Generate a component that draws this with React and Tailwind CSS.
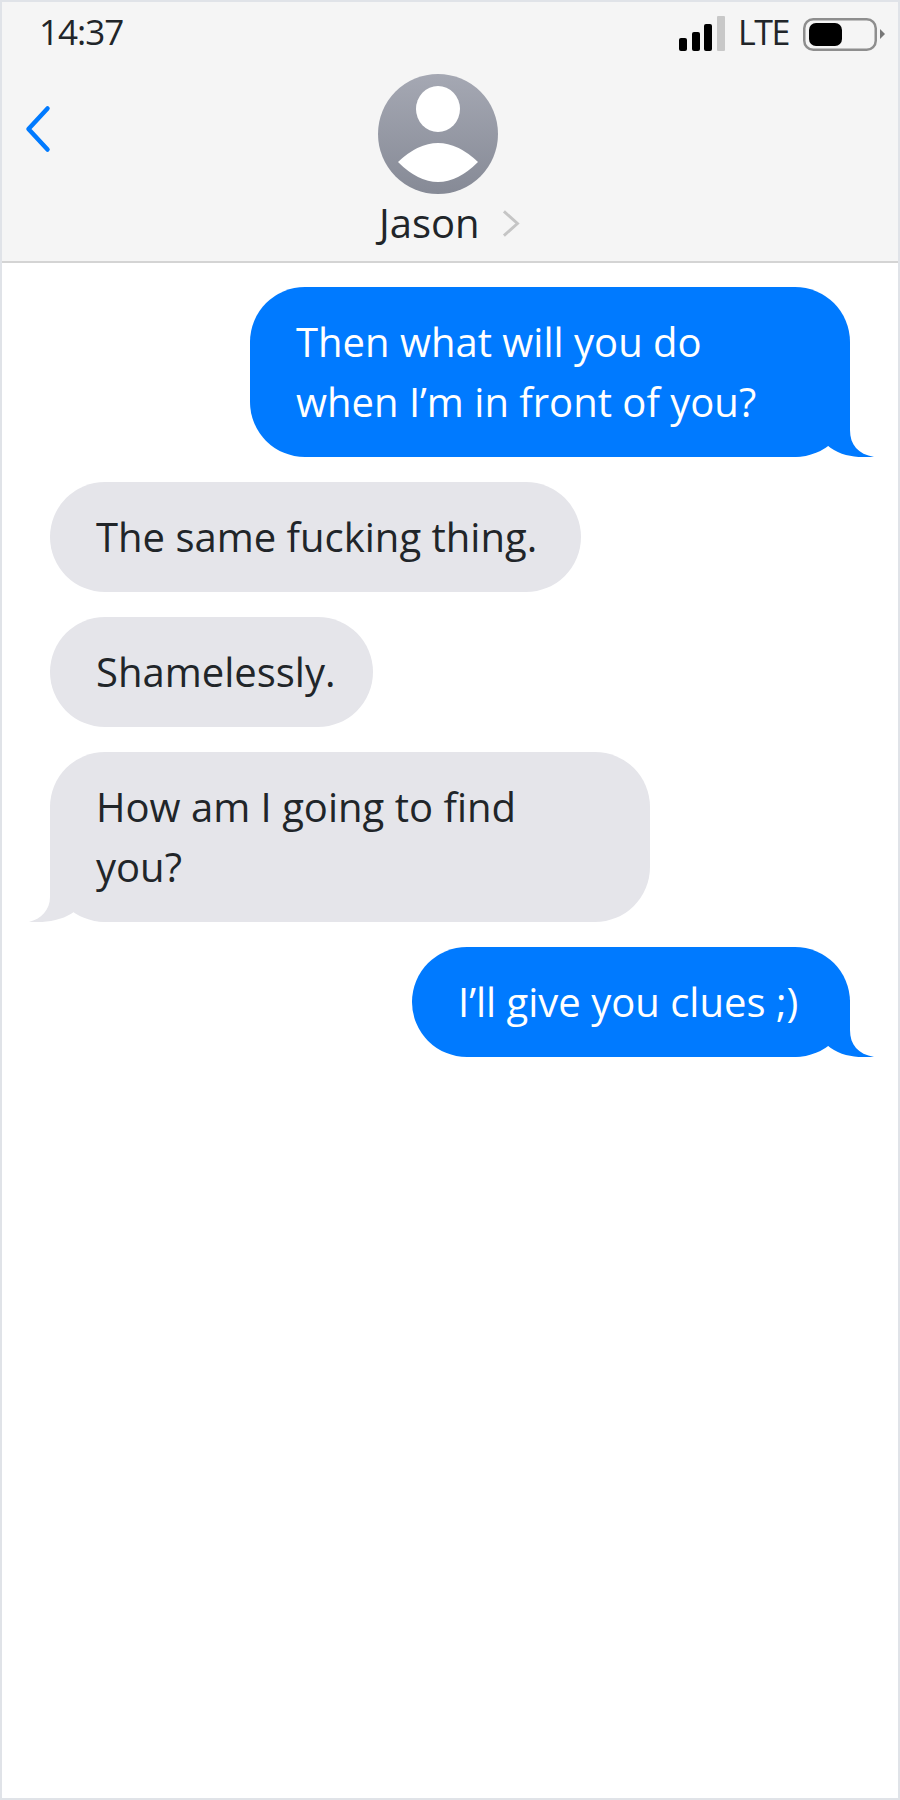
import React from "react";

const messages = [
  { id: 1, from: "me", width: "w-[600px]", lines: ["Then what will you do", "when I’m in front of you?"], tail: true },
  { id: 2, from: "them", width: "w-[531px]", lines: ["The same fucking thing."] },
  { id: 3, from: "them", width: "w-[323px]", lines: ["Shamelessly."] },
  { id: 4, from: "them", width: "w-[600px]", lines: ["How am I going to find", "you?"], tail: true },
  { id: 5, from: "me", width: "w-[438px]", lines: ["I’ll give you clues ;)"], tail: true },
];

const SentTail = () => (
  <svg className="absolute right-[-24px] bottom-0" width="84" height="57" viewBox="0 0 84 57">
    <path d="M60 0 V30 C60 45 68 54 84 57 C70 58 50 57 37 45 C30 52 15 57 0 57 V0 Z" fill="#007aff" />
  </svg>
);

const ReceivedTail = () => (
  <svg className="absolute left-[-21px] bottom-0" width="78" height="57" viewBox="0 0 78 57">
    <path d="M21 0 V32 C21 45 12 54 0 57 C14 58 34 56 46 46 C55 53 68 57 78 57 V0 Z" fill="#e5e5ea" />
  </svg>
);

const Bubble = ({ message }) => {
  const mine = message.from === "me";
  return (
    <div
      className={`relative ${message.width} rounded-[55px] px-[46px] py-[25px] text-[40px] leading-[60px] whitespace-nowrap ${
        mine ? "self-end bg-[#007aff] text-white" : "self-start bg-[#e5e5ea] text-[#212529]"
      }`}
    >
      {message.tail && (mine ? <SentTail /> : <ReceivedTail />)}
      <div className="relative">
        {message.lines.map((line) => (
          <div key={line}>{line}</div>
        ))}
      </div>
    </div>
  );
};

const StatusBar = () => (
  <div className="h-[60px] flex items-center justify-between pl-[37px] pr-[13px] text-[35px] text-[#212529] tracking-[-1px]">
    <span>14:37</span>
    <div className="flex items-center">
      <div className="flex items-end gap-[4.6px] h-[35px] mt-[2px]">
        <div className="w-2 h-[13px] rounded-[2px] bg-black" />
        <div className="w-2 h-[19px] rounded-[2px] bg-black" />
        <div className="w-2 h-[27px] rounded-[2px] bg-black" />
        <div className="w-2 h-[35px] rounded-[1px] bg-[#c8c8c8]" />
      </div>
      <span className="ml-[13px] w-[48px] text-[34px] tracking-[-1.5px]">LTE</span>
      <svg className="ml-[17px] mt-[4px]" width="82" height="33" viewBox="0 0 82 33">
        <rect x="1.25" y="1.25" width="71.5" height="30.5" rx="9" fill="none" stroke="#8e8e8e" strokeWidth="2.5" />
        <rect x="6" y="5" width="33" height="23" rx="7" fill="#000" />
        <path d="M77 11 L82 16 L77 21 Z" fill="#777" />
      </svg>
    </div>
  </div>
);

const ContactRow = () => (
  <div className="grid grid-cols-[376px_142px] pt-[12px]">
    <svg className="ml-[23px] mt-[31px]" width="26" height="48" viewBox="0 0 26 48">
      <path d="M22.5 3.5 L3.5 24 L22.5 44.5" fill="none" stroke="#007aff" strokeWidth="4.5" strokeLinecap="round" strokeLinejoin="round" />
    </svg>
    <div className="flex flex-col items-start">
      <svg width="120" height="120" viewBox="0 0 120 120">
        <defs>
          <linearGradient id="avatarFill" x1="0" y1="0" x2="0" y2="1">
            <stop offset="0" stopColor="#a5a8b3" />
            <stop offset="1" stopColor="#868a96" />
          </linearGradient>
        </defs>
        <circle cx="60" cy="60" r="60" fill="url(#avatarFill)" />
        <ellipse cx="60" cy="35" rx="22" ry="23" fill="#fff" />
        <path d="M20 88 Q60 50 100 88 Q60 128 20 88 Z" fill="#fff" />
      </svg>
      <div className="flex items-center h-[60px] w-full -mt-[1px]">
        <span className="text-[40px] leading-[60px] text-[#212529] ml-[1px]">Jason</span>
        <svg className="ml-[22px]" width="19" height="29" viewBox="0 0 19 29">
          <path d="M2 2 L16 14.5 L2 27" fill="none" stroke="#c5c5c5" strokeWidth="3" />
        </svg>
      </div>
    </div>
  </div>
);

export default function App() {
  return (
    <div className="w-[900px] h-[1800px] bg-white border-2 border-[#e0e3e8] flex flex-col font-['Open_Sans',sans-serif] overflow-hidden">
      <header className="h-[261px] bg-[#f5f5f5] border-b-2 border-[#d4d4d4]">
        <StatusBar />
        <ContactRow />
      </header>
      <main className="flex flex-col gap-[25px] pt-[24px] pl-[48px] pr-[48px]">
        {messages.map((message) => (
          <Bubble key={message.id} message={message} />
        ))}
      </main>
    </div>
  );
}
